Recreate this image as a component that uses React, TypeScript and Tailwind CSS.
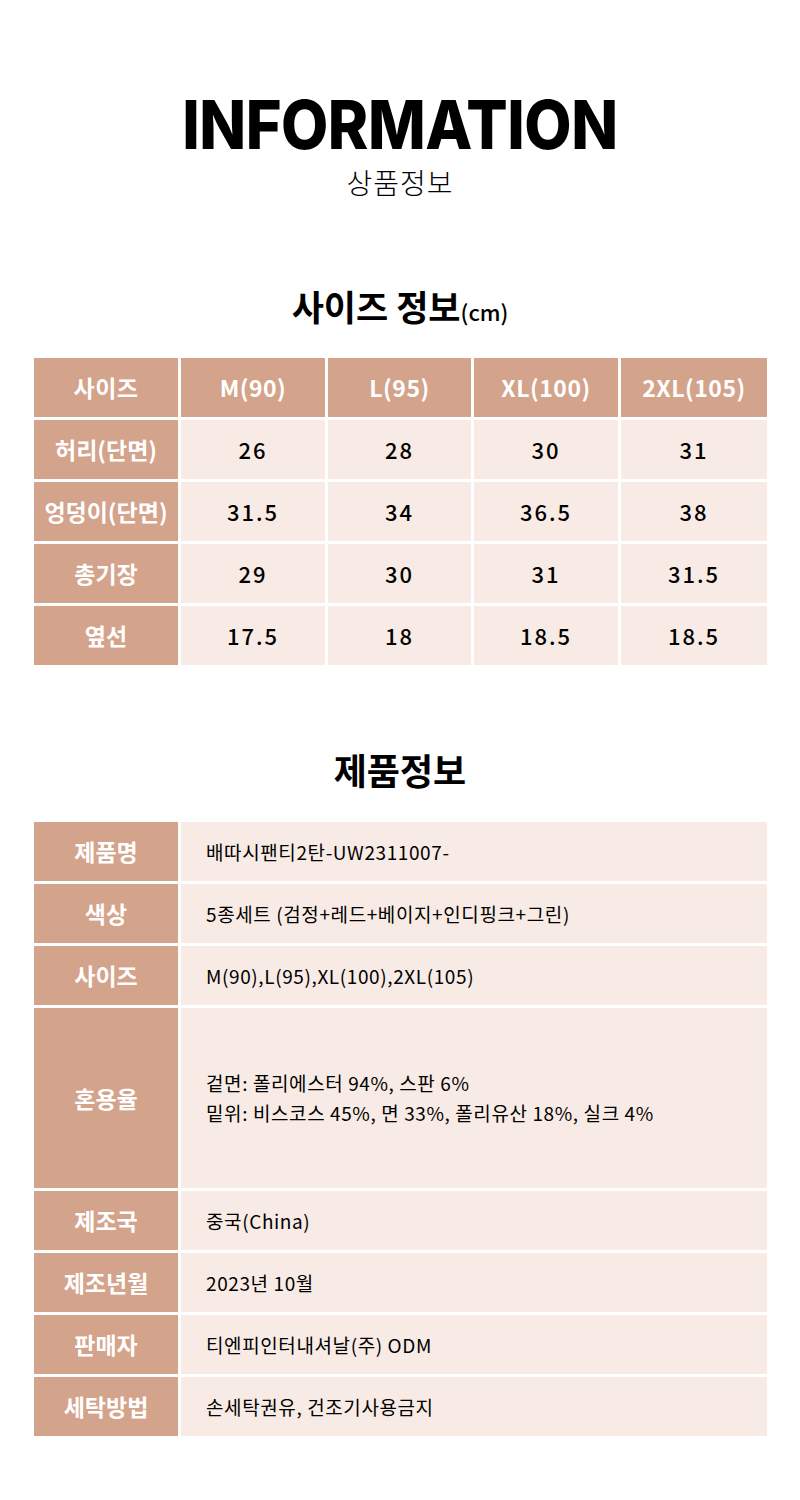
const sizeHead = ['사이즈', 'M(90)', 'L(95)', 'XL(100)', '2XL(105)'];

const sizeRows = [
  ['허리(단면)', '26', '28', '30', '31'],
  ['엉덩이(단면)', '31.5', '34', '36.5', '38'],
  ['총기장', '29', '30', '31', '31.5'],
  ['옆선', '17.5', '18', '18.5', '18.5'],
];

const productRows: { label: string; lines: string[]; tall?: boolean }[] = [
  { label: '제품명', lines: ['배따시팬티2탄-UW2311007-'] },
  { label: '색상', lines: ['5종세트 (검정+레드+베이지+인디핑크+그린)'] },
  { label: '사이즈', lines: ['M(90),L(95),XL(100),2XL(105)'] },
  {
    label: '혼용율',
    lines: ['겉면: 폴리에스터 94%, 스판 6%', '밑위: 비스코스 45%, 면 33%, 폴리유산 18%, 실크 4%'],
    tall: true,
  },
  { label: '제조국', lines: ['중국(China)'] },
  { label: '제조년월', lines: ['2023년 10월'] },
  { label: '판매자', lines: ['티엔피인터내셔날(주) ODM'] },
  { label: '세탁방법', lines: ['손세탁권유, 건조기사용금지'] },
];

export default function App() {
  return (
    <div className="w-[800px] h-[1500px] bg-white font-['Noto_Sans_CJK_KR',sans-serif] text-black">
      {/* heading */}
      <div className="flex flex-col items-center pt-[94px]">
        <h1 className="font-['Inter',sans-serif] font-extrabold text-[68px] leading-[60px] tracking-[-0.5px] scale-x-[0.9]">
          INFORMATION
        </h1>
        <p className="mt-[14px] text-[28px] font-light leading-none tracking-[1px]">상품정보</p>
      </div>

      {/* size table */}
      <div className="flex justify-center items-end mt-[92px]">
        <span className="text-[35px] font-bold leading-none">사이즈 정보</span>
        <span className="text-[22px] font-medium leading-none mb-[1px]">(cm)</span>
      </div>

      <div className="mx-[34px] mt-[35px] w-[733px] grid grid-cols-[144px_144px_143px_144px_146px] gap-[3px]">
        {sizeHead.map((h) => (
          <div
            key={h}
            className="h-[59px] bg-[#d4a38b] flex items-center justify-center text-white text-[23px] font-bold tracking-[0.5px]"
          >
            {h}
          </div>
        ))}
        {sizeRows.map((row) =>
          row.map((cell, i) =>
            i === 0 ? (
              <div
                key={row[0] + i}
                className="h-[59px] bg-[#d4a38b] flex items-center justify-center text-white text-[23px] font-bold"
              >
                {cell}
              </div>
            ) : (
              <div
                key={row[0] + i}
                className="h-[59px] bg-[#f8ebe5] flex items-center justify-center text-[22px] font-medium tracking-[2px]"
              >
                {cell}
              </div>
            )
          )
        )}
      </div>

      {/* product info */}
      <div className="flex justify-center mt-[86px]">
        <span className="text-[36px] font-bold leading-none">제품정보</span>
      </div>

      <div className="mx-[34px] mt-[35px] w-[733px] flex flex-col gap-[3px]">
        {productRows.map((r) => (
          <div key={r.label} className={`flex gap-[3px] ${r.tall ? 'h-[180px]' : 'h-[59px]'}`}>
            <div className="w-[144px] shrink-0 bg-[#d4a38b] flex items-center justify-center text-white text-[23px] font-bold">
              {r.label}
            </div>
            <div className="flex-1 bg-[#f8ebe5] flex flex-col justify-center pl-[25px] text-[19px] leading-[30px] tracking-[0.6px]">
              {r.lines.map((l) => (
                <span key={l}>{l}</span>
              ))}
            </div>
          </div>
        ))}
      </div>
    </div>
  );
}
